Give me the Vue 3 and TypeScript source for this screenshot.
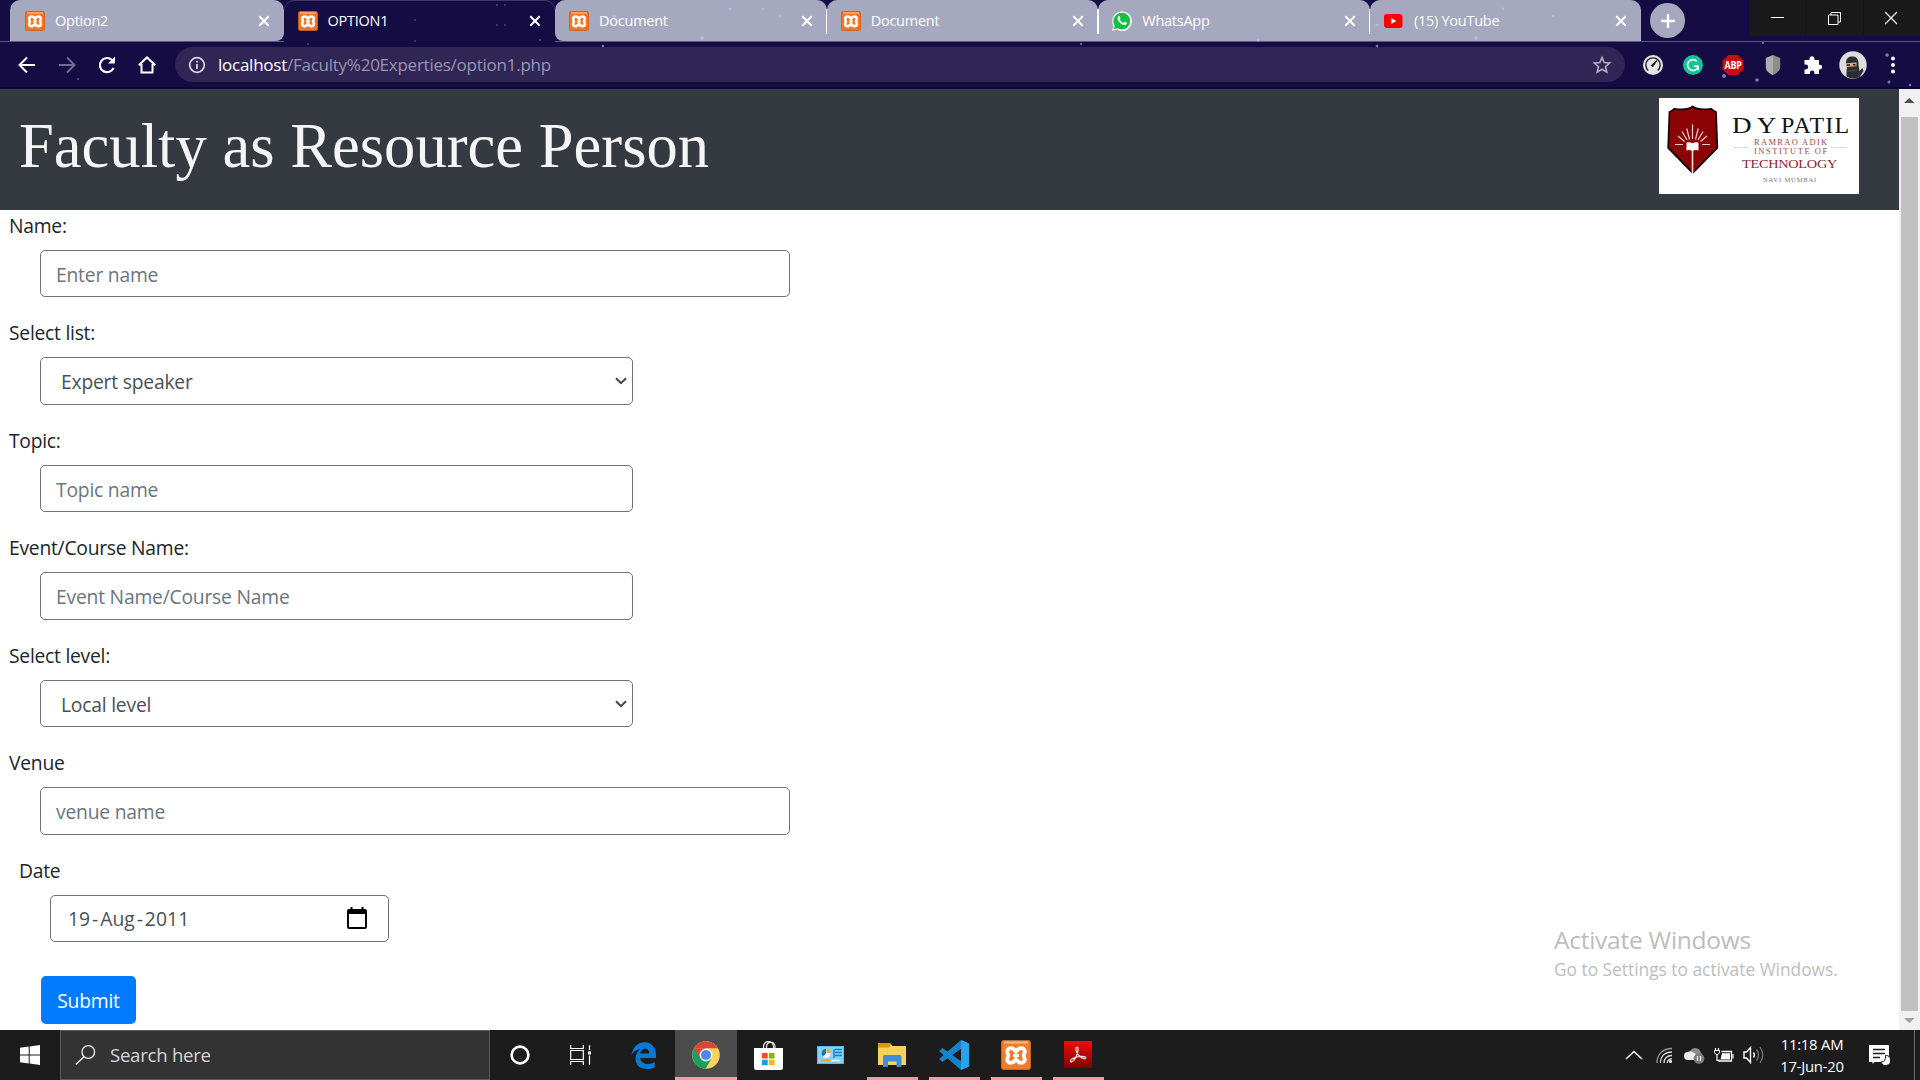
<script setup lang="ts">
interface Tab { title: string; icon: 'xampp' | 'whatsapp' | 'youtube'; active?: boolean; sep?: boolean }
interface Field { label: string; kind: 'input' | 'select'; text: string; wide?: boolean }

const tabs: Tab[] = [
  { title: 'Option2', icon: 'xampp' },
  { title: 'OPTION1', icon: 'xampp', active: true },
  { title: 'Document', icon: 'xampp' },
  { title: 'Document', icon: 'xampp', sep: true },
  { title: 'WhatsApp', icon: 'whatsapp', sep: true },
  { title: '(15) YouTube', icon: 'youtube', sep: true },
]

const fields: Field[] = [
  { label: 'Name:', kind: 'input', text: 'Enter name', wide: true },
  { label: 'Select list:', kind: 'select', text: 'Expert speaker' },
  { label: 'Topic:', kind: 'input', text: 'Topic name' },
  { label: 'Event/Course Name:', kind: 'input', text: 'Event Name/Course Name' },
  { label: 'Select level:', kind: 'select', text: 'Local level' },
  { label: 'Venue', kind: 'input', text: 'venue name', wide: true },
]

// [x, y, radius] of the stars on the browser theme
const stars: [number, number, number][] = [
  [415, 20, 0.7], [497, 5, 0.8], [505, 5, 0.7], [497, 25, 0.7], [505, 25, 0.7], [308, 44, 0.8], [415, 41, 0.7], [78, 79, 0.8],
  [540, 40, 0.8], [603, 46, 1.2], [614, 17, 2], [730, 9, 1.6], [763, 9, 1], [780, 16, 1], [702, 38, 2], [1081, 44, 1],
  [1258, 40, 1.5], [1377, 25, 1.6], [1377, 46, 1.3], [1503, 9, 1.4], [1553, 16, 1.1], [1476, 38, 2], [1724, 76, 2],
  [1757, 80, 1.8], [1763, 43, 1], [1887, 55, 1.7], [1889, 82, 1.5], [1910, 85, 1.2],
]
</script>

<template>
  <div class="screen">
    <header class="chrome">
      <svg class="stars" width="1920" height="89">
        <circle v-for="(s, i) in stars" :key="i" :cx="s[0]" :cy="s[1]" :r="s[2]" />
      </svg>
      <div class="strip">
        <div v-for="(t, i) in tabs" :key="i" class="tab" :class="{ active: t.active, sep: t.sep, first: i === 0 }">
          <svg v-if="t.icon === 'xampp'" width="20" height="20" viewBox="0 0 30 30">
            <rect x=".7" y=".7" width="28.600" height="28.600" rx="3" fill="#f47421" stroke="#c9601e" stroke-width="1.400" />
            <path d="M3 3h24" stroke="#f9b183" stroke-width="2" />
            <path d="M15 12C12 6 5.500 8 6.300 12c.3 2 1 2.500 1 3.500s-.7 1.500-1 3.500C5.500 23 12 25 15 19c3 6 9.500 4 8.700 0-.3-2-1-2.500-1-3.500s.7-1.500 1-3.500C24.500 8 18 6 15 12Z" fill="none" stroke="#fff" stroke-width="4" stroke-linejoin="round" />
            <path d="M12 14h6v3h-6z" fill="#fff" />
          </svg>
          <svg v-else-if="t.icon === 'whatsapp'" width="20" height="20" viewBox="0 0 20 20">
            <path d="M0 20l1.500-5A9.800 9.800 0 1 1 5 18.600Z" fill="#fff" />
            <path d="M1.700 18.300l1-3.600A8.400 8.400 0 1 1 5.400 17.300Z" fill="#12c143" />
            <path d="M6.500 5.200c.6-.5 1.100-.3 1.300.2l.7 1.600c.1.500-.9 1.200-.8 1.500.8 1.500 2 2.600 3.600 3.300.5.100 1.100-1.200 1.500-1.100l1.800.9c.6.300.1 1.700-.6 2.100-1.600 1-4.100-.1-5.700-1.600S5.200 8.700 5.500 7c.1-.8.500-1.400 1-1.800Z" fill="#fff" />
          </svg>
          <svg v-else width="20" height="20" viewBox="0 0 20 20">
            <rect x="0" y="3" width="18.500" height="14" rx="3" fill="#f00" />
            <path d="M7.300 7v6l5-3z" fill="#fff" />
          </svg>
          <span class="title">{{ t.title }}</span>
          <svg class="close" width="12" height="12" viewBox="0 0 12 12"><path d="M1.300 1.300l9.400 9.400M10.700 1.300l-9.400 9.400" stroke="#fff" stroke-width="2" /></svg>
        </div>
        <div class="plus">
          <svg width="16" height="16" viewBox="0 0 16 16"><path d="M8 1v14M1 8h14" stroke="#fff" stroke-width="2.400" /></svg>
        </div>
        <div class="winbtns">
          <div><svg width="14" height="14"><path d="M1 6.500h13" stroke="#fff" /></svg></div>
          <div><svg width="14" height="14"><path d="M.5 4H10v9.500H.5zM3 4V1.500h9.500V11H10" fill="none" stroke="#fff" /></svg></div>
          <div><svg width="14" height="14"><path d="M0 1l12 12M12 1L0 13" stroke="#fff" stroke-width="1.200" /></svg></div>
        </div>
      </div>
      <div class="toolbar">
        <div class="nav">
          <svg width="20" height="20" viewBox="0 0 20 20"><path d="M18 10H3M10 2.500L2.500 10l7.500 7.500" fill="none" stroke="#fff" stroke-width="2" /></svg>
          <svg width="20" height="20" viewBox="0 0 20 20"><path d="M2 10h15M10 2.500l7.500 7.500-7.500 7.500" fill="none" stroke="#746d92" stroke-width="1.900" /></svg>
          <svg width="20" height="20" viewBox="0 0 20 20"><path d="M16.600 12.800A7.100 7.100 0 1 1 15 5" fill="none" stroke="#fff" stroke-width="2.200" /><path d="M18 1.500v7h-7z" fill="#fff" /></svg>
          <svg width="20" height="20" viewBox="0 0 20 20"><path d="M1.800 10.300L10 2.500l8.200 7.800M4.500 9v8.500h11V9" fill="none" stroke="#fff" stroke-width="2" /></svg>
        </div>
        <div class="omnibox">
          <svg width="18" height="18" viewBox="0 0 18 18"><circle cx="9" cy="9" r="7.300" fill="none" stroke="#d8d6e0" stroke-width="1.700" /><path d="M9 8v5M9 4.800v1.800" stroke="#d8d6e0" stroke-width="1.800" /></svg>
          <span class="url"><b>localhost</b>/Faculty%20Experties/option1.php</span>
          <svg class="star" width="20" height="20" viewBox="0 0 20 20"><path d="M10 2.400l2.200 5.100 5.500.5-4.200 3.700 1.300 5.400L10 14.200l-4.800 2.900 1.300-5.400L2.300 8l5.500-.5z" fill="none" stroke="#b3afc2" stroke-width="1.600" /></svg>
        </div>
        <div class="exts">
          <svg width="20" height="20" viewBox="0 0 20 20"><circle cx="10" cy="10" r="10" fill="#e6e6e6" /><path d="M5.300 15.500A7.200 7.200 0 1 1 14.700 15.500" fill="none" stroke="#222" stroke-width="1.400" /><path d="M8.300 10.300L14 5.500l-4.200 6.300z" fill="#222" stroke="#222" /></svg>
          <svg width="20" height="20" viewBox="0 0 20 20"><circle cx="10" cy="10" r="10" fill="#15c39a" /><path d="M13.800 6.200A5.400 5.400 0 1 0 15.200 11.500M10.800 11.300h4.400v4" fill="none" stroke="#fff" stroke-width="1.600" /></svg>
          <svg width="22" height="20" viewBox="0 0 22 20"><path d="M6.500 0h9L21.500 5.500v9L15.500 20h-9L.5 14.500v-9z" fill="#c70d0e" /><text x="11" y="13.700" text-anchor="middle" textLength="17" lengthAdjust="spacingAndGlyphs" class="abp">ABP</text></svg>
          <svg width="20" height="20" viewBox="0 0 20 20"><path d="M10 0l7.200 3v9c0 4-3.500 6.500-7.200 8z" fill="#8d8d8d" /><path d="M10 0L2.800 3v9c0 4 3.500 6.500 7.200 8z" fill="#adadad" /></svg>
          <svg width="20" height="20" viewBox="0 0 20 20"><path d="M1.500 5h5V3.700a2.500 2.500 0 0 1 5 0V5H16v4.700h.8a2.300 2.300 0 0 1 0 4.700H16V19h-4.600v-1.400a2.200 2.200 0 0 0-4.400 0V19H1.500v-4.600h1.300a2.400 2.400 0 0 0 0-4.800H1.500z" fill="#fff" /></svg>
          <svg width="28" height="28" viewBox="0 0 28 28"><circle cx="14" cy="14" r="13.700" fill="#dedede" /><path d="M7 12c0-6 4-7 7.500-6.500S20 9 19.500 14l1 6 3-3 1 3-4 6c-5 2.500-9 1.500-13-.5V20l.5-3z" fill="#2b2d31" /><path d="M7 12.300l10.500-.8v3.800L8 16z" fill="#e0a57c" /><path d="M8 14h3M14 13.700h2.500" stroke="#222" stroke-width="1.500" /><path d="M8 20.500l10-1.500" stroke="#42525b" /></svg>
          <svg width="20" height="20" viewBox="0 0 20 20"><g fill="#fff"><circle cx="10" cy="3.500" r="2" /><circle cx="10" cy="10" r="2" /><circle cx="10" cy="16.500" r="2" /></g></svg>
        </div>
      </div>
    </header>

    <div class="viewport">
      <main class="page">
        <div class="banner">
          <h1>Faculty as Resource Person</h1>
          <svg class="logo" width="200" height="96" viewBox="0 0 200 96">
            <rect width="200" height="96" fill="#fff" />
            <path d="M33.700 8.500c-4 3-11 3.500-18.500 2.300-1.500 1.500-3 2.500-4.700 3.200L9.200 50 33.700 75 58.300 50 57 14c-1.700-.7-3.200-1.700-4.700-3.200C44.800 12 37.700 11.500 33.700 8.500z" fill="#8b0304" stroke="#170707" stroke-width="1.800" />
            <path d="M33.500 52v24" stroke="#f4dede" stroke-width="1.600" />
            <path d="M27.500 44.500q3-1 6 .8 3-1.800 6-.8v8q-3-1-6 .6-3-1.600-6-.6z" fill="#fff" />
            <path d="M33.500 41V26.500M30.500 41.500l-2.700-11M36.500 41.500l2.700-11M28 42l-5-8.500M39 42l5-8.500M25.500 43.500l-6.500-5.500M41.500 43.500L48 38M24 46.500H16M43 46.500h8" stroke="#f0cfcf" stroke-width="1.200" />
            <g class="serif">
              <text x="73" y="35" font-size="24" fill="#151515" textLength="44" lengthAdjust="spacingAndGlyphs">D Y</text>
              <text x="122" y="35" font-size="24" fill="#151515" textLength="68">PATIL</text>
              <text x="95" y="47" font-size="8.500" fill="#9a4a52" textLength="73">RAMRAO ADIK</text>
              <text x="95" y="56" font-size="8.500" fill="#9a4a52" textLength="73">INSTITUTE OF</text>
              <text x="83" y="70" font-size="13.500" fill="#8e2732" textLength="95" lengthAdjust="spacingAndGlyphs">TECHNOLOGY</text>
              <text x="104" y="84" font-size="6.500" fill="#777" textLength="53">NAVI MUMBAI</text>
            </g>
            <path d="M75 49.500h15M172 49.500h16" stroke="#ddd" />
          </svg>
        </div>
        <form class="form" @submit.prevent>
          <div v-for="f in fields" :key="f.label" class="group">
            <label>{{ f.label }}</label>
            <input v-if="f.kind === 'input'" class="control" :class="{ wide: f.wide }" type="text" :placeholder="f.text" />
            <div v-else class="control select">
              <span>{{ f.text }}</span>
              <svg width="12" height="8" viewBox="0 0 12 8"><path d="M1 1.200l5 5 5-5" fill="none" stroke="#40464c" stroke-width="2" /></svg>
            </div>
          </div>
          <div class="group date">
            <label>Date</label>
            <div class="control datebox">
              <span>19<i>-</i>Aug<i>-</i>2011</span>
              <svg width="20" height="22" viewBox="0 0 20 22"><path d="M3.500 0h2v2h9V0h2v2H18q2 0 2 2v16q0 2-2 2H2q-2 0-2-2V4q0-2 2-2h1.500zM2 7v13h16V7z" fill="#000" fill-rule="evenodd" /></svg>
            </div>
          </div>
          <button class="submit">Submit</button>
        </form>
      </main>
      <aside class="scroll">
        <svg width="21" height="28"><path d="M5 14l5.300-5 5.200 5z" fill="#505050" /></svg>
        <div class="thumb"></div>
        <svg width="21" height="19"><path d="M5 7h10.500l-5.200 5z" fill="#a0a0a0" /></svg>
      </aside>
      <div class="activate">
        <div class="a1">Activate Windows</div>
        <div class="a2">Go to Settings to activate Windows.</div>
      </div>
    </div>

    <footer class="taskbar">
      <div class="start"><svg width="20" height="20" viewBox="0 0 20 20"><path d="M0 2.800l8.700-1.200v7.900H0zM9.700 1.400L20 0v9.500H9.700zM0 10.500h8.700v7.900L0 17.200zM9.700 10.500H20V20L9.700 18.600z" fill="#fff" /></svg></div>
      <div class="search">
        <svg width="21" height="20" viewBox="0 0 21 20"><circle cx="13.300" cy="7" r="6.300" fill="none" stroke="#eee" stroke-width="1.300" /><path d="M9 11.700L.8 19.500" stroke="#eee" stroke-width="1.400" /></svg>
        <span>Search here</span>
      </div>
      <div class="sys"><svg width="20" height="20"><circle cx="10" cy="10" r="8.400" fill="none" stroke="#fff" stroke-width="2.600" /></svg></div>
      <div class="sys"><svg width="21" height="20"><path d="M.7 0v3.500h12.600V0M.7 20v-3.500h12.600V20M.7 5.500h12.600v9H.7zM19.500 0v5M19.500 10.500V20" fill="none" stroke="#fff" stroke-width="1.200" /><path d="M18 6.500h3v3h-3z" fill="#fff" /></svg></div>
      <div class="app edge"><svg width="26" height="27" viewBox="0 0 26 27"><path d="M.5 12.800C2 5 7 .3 13.500.3 21 .3 25 6 25 12.500V16H9.300c.2 4 3.700 6 7.500 6 2.700 0 5-.7 7-2v5.200c-2.300 1.300-5 1.800-8 1.800C9.500 27 4.500 23.500 4.500 16.500c0-4.500 2.300-7.500 5-9.500C6 7.500 2.500 9.500.5 12.800zM9.400 11.500h8.800c0-3-1.500-4.800-4-4.800-2.700 0-4.500 2-4.800 4.800z" fill="#0a78d5" /></svg></div>
      <div class="app on focus"><svg width="28" height="28" viewBox="0 0 28 28"><circle cx="14" cy="14" r="13.800" fill="#fdd35c" /><path d="M2 7.200A13.800 13.800 0 0 1 26 7.200H14z" fill="#d9453a" /><path d="M2 7.200A13.800 13.800 0 0 0 13.500 27.800L19.600 17.500 14 14z" fill="#19a05b" /><path d="M2 7.200L8.300 17.500 14 14V7.200z" fill="#d9453a" /><circle cx="14" cy="14" r="6.500" fill="#f2f2f2" /><circle cx="14" cy="14" r="5" fill="#4a87ee" /></svg></div>
      <div class="app"><svg width="29" height="29" viewBox="0 0 29 29"><path d="M9.500 8V5.500a5 5 0 0 1 10 0V8M12.500 8V5.500a4 4 0 0 1 8.500 0V8" fill="none" stroke="#ddd" stroke-width="1.300" /><path d="M0 7h29v20q0 2-2 2H2q-2 0-2-2z" fill="#fff" /><path d="M8 12h5.700v5.500H8z" fill="#f25022" /><path d="M14.800 12h5.700v5.500h-5.700z" fill="#7fba00" /><path d="M8 18.700h5.700v5.500H8z" fill="#00a4ef" /><path d="M14.800 18.700h5.700v5.500h-5.700z" fill="#ffb900" /></svg></div>
      <div class="app"><svg width="27" height="18" viewBox="0 0 27 18"><rect width="27" height="18" fill="#5eb8ec" /><rect x="1" y="1" width="25" height="16" fill="#83d2f8" /><circle cx="9" cy="7.500" r="4.700" fill="#eef8ff" /><path d="M9 7.500V2.800a4.700 4.700 0 0 0-3.300 8z" fill="#1a75bd" /><path d="M9.500 7V2.500A4.700 4.700 0 0 1 13.500 7z" fill="#f5a623" /><path d="M18 3.500h7M18 6.500h7M18 9.500h7M17 3v9" stroke="#1d7fc4" stroke-width="1.400" /><path d="M4 14.500h10" stroke="#f39c12" stroke-width="1.500" /><path d="M14 14.500h9" stroke="#fff" stroke-width="1.300" /></svg></div>
      <div class="app on"><svg width="28" height="24" viewBox="0 0 28 24"><path d="M0 1q0-1 1-1h11l2.500 3H27q1 0 1 1v18H0z" fill="#fbd05e" /><path d="M0 1q0-1 1-1h11l1 2-2 2.500H0z" fill="#d69a07" /><path d="M5 24V13.500q0-1.500 1.500-1.500h15.500q1.500 0 1.500 1.500V24h-5v-5.500H10V24z" fill="#3c90d6" /></svg></div>
      <div class="app on"><svg width="31" height="30" viewBox="0 0 31 30"><path d="M22 0l8 3.500v23L22 30 0 11l3.500-3L23 22V8L3.500 22 0 19z" fill="#1583c9" /><path d="M22 0l8 3.500v23L22 30z" fill="#2ba3e8" /></svg></div>
      <div class="app on"><svg width="30" height="30" viewBox="0 0 30 30"><rect x=".5" y=".5" width="29" height="29" rx="2" fill="#f37a28" stroke="#b96a38" /><path d="M3 2.500h24" stroke="#f9b98f" stroke-width="2" /><path d="M15 12C12 6 5.500 8 6.300 12c.3 2 1 2.500 1 3.500s-.7 1.500-1 3.500C5.500 23 12 25 15 19c3 6 9.500 4 8.700 0-.3-2-1-2.500-1-3.500s.7-1.500 1-3.500C24.500 8 18 6 15 12Z" fill="none" stroke="#fff" stroke-width="3.800" stroke-linejoin="round" /><path d="M12 14h6v3h-6z" fill="#fff" /></svg></div>
      <div class="app on acro"><svg width="28" height="27" viewBox="0 0 28 27"><defs><linearGradient id="ar" x1="0" y1="0" x2="0" y2="1"><stop offset="0" stop-color="#f30b0b" /><stop offset="1" stop-color="#7d0303" /></linearGradient></defs><rect width="28" height="27" fill="url(#ar)" /><path d="M12.500 6.500c1.500-.8 2.200 1 1.200 4.500-1 3.800-3.500 9-6 9.800-1.800.3-2-1.500 1-3.200 3-1.600 8.500-2.600 11.500-2 2.500.5 1.800 2.700-.5 2-3.500-1-7.200-5.500-7.800-9-.2-1.200.1-1.800.6-2.100z" fill="none" stroke="#f6e4e4" stroke-width="1.200" /></svg></div>
      <div class="tray">
        <svg class="t1" width="18" height="10"><path d="M1 9l8-7.500L17 9" fill="none" stroke="#fff" stroke-width="1.500" /></svg>
        <svg class="t2" width="17" height="17"><path d="M1 16C1 7 7 1.500 16 1.500" fill="none" stroke="#999" stroke-width="1.300" /><path d="M4.500 16C4.500 9 9 5 16 5M8 16c0-4.500 3-7.500 8-7.500M11.300 16c0-2.500 1.700-4.200 4.700-4.200" fill="none" stroke="#ddd" stroke-width="1.300" /><circle cx="14.500" cy="14.500" r="1.500" fill="#fff" /></svg>
        <svg class="t3" width="21" height="18"><path d="M6 5a6 6 0 0 1 11 2c2 1 2 6-1 6H6z" fill="#8c8c8c" /><path d="M4 14a4 4 0 0 1 0-8q3-2 6 1 3 0 3 7z" fill="#ececec" /><circle cx="15" cy="12.500" r="5.300" fill="#7c7c7c" /><path d="M13.500 10v5M16.500 10v5" stroke="#fff" stroke-width="1.200" /></svg>
        <svg class="t4" width="20" height="15"><path d="M5 11.500v1.500h12.500V3.500H7.500" fill="none" stroke="#fff" stroke-width="1.300" /><path d="M8 5.200h8v6.200H6.500z" fill="#fff" /><path d="M19 6v4.500M1.500 0v3M4.500 0v3M3 6v6.500h2" stroke="#fff" stroke-width="1.200" fill="none" /><path d="M.5 2.500h5v2.200L4 6.500H2L.5 4.700z" fill="#1c1c1c" stroke="#fff" /></svg>
        <svg class="t5" width="22" height="18"><path d="M1 6h2.500l4-4.500v15l-4-4.500H1z" fill="none" stroke="#fff" stroke-width="1.400" /><path d="M10.500 6.500q1.800 2.500 0 5" fill="none" stroke="#fff" stroke-width="1.400" /><path d="M13.500 3.500q4 5.500 0 11M17 1q5.500 8 0 16" fill="none" stroke="#777" stroke-width="1.300" /></svg>
        <div class="clock"><span>11:18 AM</span><span>17-Jun-20</span></div>
        <svg class="t6" width="21" height="21"><path d="M0 0h20v17H5.500L3.500 19v-2H0z" fill="#fff" /><path d="M4 4.500h12M4 8.500h12M4 12.500h7" stroke="#1c1c1c" stroke-width="1.300" /><path d="M16.500 10.500a5 5 0 1 1-4.500 6.500q5 0 4.500-6.500z" fill="#fff" stroke="#1c1c1c" /></svg>
        <i class="peek"></i>
      </div>
    </footer>
  </div>
</template>

<style>
body { margin: 0; overflow: hidden; }
</style>

<style scoped>
* { box-sizing: border-box; }
svg { display: block; flex: none; }
.screen { width: 1920px; height: 1080px; display: flex; flex-direction: column; overflow: hidden; background: #fff; font-family: "Open Sans", "Noto Sans", sans-serif; letter-spacing: -0.016em; }

.chrome { position: relative; height: 89px; background: #160c44; border-bottom: 2px solid #0e0733; flex: none; }
.stars { position: absolute; left: 0; top: 0; z-index: 3; fill: #b9c3ff; opacity: .6; pointer-events: none; }
.strip { height: 42px; display: flex; padding-left: 10px; align-items: flex-start; box-shadow: inset 0 -1px #5e5585; }
.tab { position: relative; width: 271.600px; height: 41px; padding: 1px 14px 0 14px; display: flex; align-items: center; background: #a5a8be; border-radius: 10px 10px 0 0; color: #fff; font-size: 14.500px; flex: none; }
.tab.first { width: 273.500px; padding: 1px 14px 0 15px; border-bottom-right-radius: 8px; }
.tab.active { background: #160c44; height: 42px; box-shadow: inset 0 1px #3f3766; padding-top: 0; }
.tab.active + .tab { border-bottom-left-radius: 8px; }
.tab.sep::before { content: ""; position: absolute; left: -1px; top: 9px; width: 1.500px; height: 25px; background: #fff; }
.title { margin-left: 10px; flex: 1; line-height: 20px; }
.plus { width: 35px; height: 35px; margin: 3px 0 0 9px; border-radius: 50%; background: #a5a8be; display: flex; align-items: center; justify-content: center; }
.winbtns { margin-left: auto; display: flex; gap: 1px; }
.winbtns div { width: 56.300px; height: 36px; background: #191919; display: flex; align-items: center; justify-content: center; }

.toolbar { height: 45px; display: flex; align-items: center; }
.nav { width: 175px; padding-left: 17px; display: flex; gap: 20px; }
.omnibox { width: 1450px; height: 35px; border-radius: 18px; background: #2f2656; display: flex; align-items: center; padding: 0 13px 0 13px; }
.url { margin-left: 12px; flex: 1; font-size: 17px; line-height: 24px; letter-spacing: -.25px; white-space: nowrap; color: #9a95ac; }
.url b { font-weight: 400; color: #fff; }
.exts { flex: 1; display: flex; align-items: center; padding-left: 8px; }
.exts svg { margin: 0 10px; }
.exts svg:nth-child(3) { margin: 0 9px; }
.exts svg:nth-child(6) { margin: 0 6px; }
.abp { font: 700 10.500px "Open Sans", sans-serif; fill: #fff; }

.viewport { position: relative; flex: 1; display: flex; min-height: 0; }
.page { width: 1899px; }
.banner { height: 121px; background: #353940; display: flex; justify-content: space-between; padding: 9px 40px 0 19px; }
h1 { margin: 0; font: 400 62.500px/96px "Liberation Serif", serif; color: #f5f5f5; letter-spacing: .04px; white-space: nowrap; }
.serif { font-family: "Liberation Serif", serif; }
.form { margin-top: -.3px; padding-left: 9px; font-size: 19.300px; color: #212529; }
.group { display: flex; flex-direction: column; align-items: flex-start; height: 107.500px; }
label { height: 40px; line-height: 31px; }
.control { margin-left: 31px; width: 593px; height: 47.500px; border: 1px solid #6c757d; border-radius: 5px; background: #fff; padding: 2px 15px 0; font: inherit; letter-spacing: -.011em; color: #495057; outline: none; }
.control::placeholder { color: #6c757d; opacity: 1; }
.wide { width: 750px; }
.select { display: flex; align-items: center; justify-content: space-between; padding: 1px 5px 0 20px; }
.select span { padding-top: 1px; }
.date { padding-left: 10px; height: 121.300px; }
.datebox { width: 339px; display: flex; align-items: center; justify-content: space-between; padding: 0 21px 0 17px; letter-spacing: .1px; }
.datebox i { font-style: normal; margin: 0 1.800px; }
.submit { display: block; margin-left: 32px; width: 95px; height: 48px; border: 0; border-radius: 5px; background: #007bff; color: #fff; font: inherit; letter-spacing: -.01em; padding: 0; }
.scroll { width: 21px; background: #f1f1f1; display: flex; flex-direction: column; }
.thumb { flex: 1; margin: 0 2px; background: #c1c1c1; }
.activate { position: absolute; left: 1554px; top: 834px; color: #bdbdbd; white-space: nowrap; }
.a1 { font-size: 24.500px; line-height: 34px; }
.a2 { font-size: 17.300px; line-height: 25px; letter-spacing: .02px; }

.taskbar { height: 50px; background: #1c1c1c; display: flex; flex: none; color: #fff; }
.start { width: 60px; display: flex; align-items: center; justify-content: center; }
.search { width: 430px; background: #333; border: 1px solid #5a5a5a; display: flex; align-items: center; padding-left: 14px; font-size: 18.600px; color: #d6d6d6; }
.search span { margin: -2px 0 0 14px; }
.sys { width: 60px; display: flex; align-items: center; justify-content: center; }
.edge { margin-left: 3px; }
.app { width: 62px; display: flex; align-items: center; justify-content: center; position: relative; }
.app.on::after { content: ""; position: absolute; left: 6px; right: 5px; bottom: 0; height: 3px; background: #ff98a5; }
.app.focus { background: #4b4b4b; }
.app.focus::after { left: 0; right: 0; }
.acro svg { margin-top: -2px; }
.tray { margin-left: auto; width: 295px; display: flex; align-items: center; }
.t2 { margin-left: 13px; }
.t3 { margin-left: 11px; }
.t4 { margin-left: 9px; }
.t5 { margin-left: 9px; }
.clock { width: 94px; display: flex; flex-direction: column; align-items: center; font-size: 14.900px; line-height: 22px; }
.t6 { margin-left: 10px; }
.peek { width: 1px; height: 50px; margin-left: auto; margin-right: 5px; background: #6b6b6b; }
</style>
